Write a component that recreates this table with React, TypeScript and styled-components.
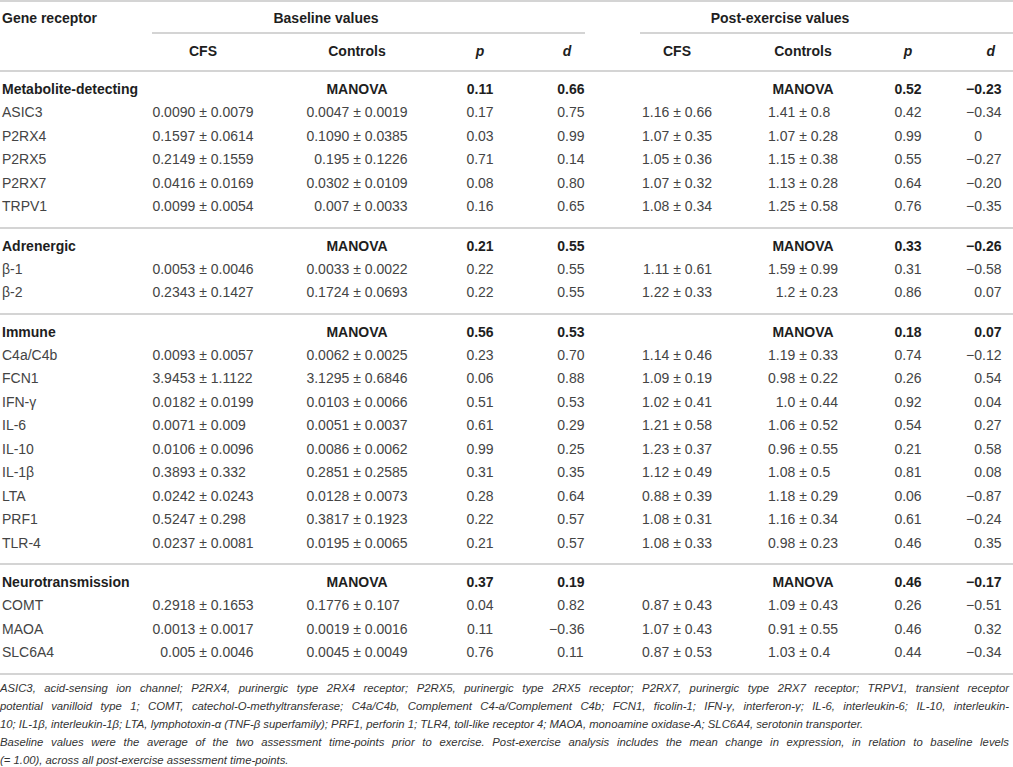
import React from "react";
import styled, { createGlobalStyle } from "styled-components";

const GlobalStyle = createGlobalStyle`
  body {
    margin: 0;
    background: #ffffff;
  }
  * {
    box-sizing: border-box;
  }
`;

// gene | CFS | Controls | p | d || CFS | Controls | p | d
const COLS = "152px 102px 206px 40px 134px 86px 166px 44px 1fr";
const LINE = "2px solid #d4d4d4";

type Align = "left" | "center" | "right";

const Page = styled.div`
  width: 1013px;
  font-family: "Liberation Sans", Arial, sans-serif;
  font-size: 14px;
  color: #444444;
`;

const Head = styled.div`
  display: grid;
  grid-template-columns: ${COLS};
  border-top: ${LINE};
`;

const HeadLabel = styled.div<{ $align?: Align; $pr?: number }>`
  padding: 5.5px ${({ $pr }) => $pr || 0}px 7.5px 0;
  line-height: 23px;
  font-weight: 700;
  color: #1e1e1e;
  text-align: ${({ $align }) => $align || "center"};
  white-space: nowrap;
`;

const GeneHead = styled.div`
  padding: 5px 0 0 2px;
  line-height: 23px;
  font-weight: 700;
  color: #1e1e1e;
`;

const SpanHead = styled.div<{ $from: number; $to: number; $ml: number; $mr: number; $trail: number }>`
  grid-column: ${({ $from, $to }) => `${$from} / ${$to}`};
  margin: 0 ${({ $mr }) => $mr}px 0 ${({ $ml }) => $ml}px;
  padding: 5px ${({ $trail }) => $trail}px 2px 0;
  border-bottom: ${LINE};
  line-height: 23px;
  font-weight: 700;
  color: #1e1e1e;
  text-align: center;
`;

const Stat = styled.span`
  font-style: italic;
`;

const Group = styled.section<{ $last?: boolean }>`
  border-top: ${LINE};
  border-bottom: ${({ $last }) => ($last ? LINE : "none")};
  padding-bottom: 8px;
`;

const Row = styled.div<{ $title?: boolean }>`
  display: grid;
  grid-template-columns: ${COLS};
  padding-top: ${({ $title }) => ($title ? 6 : 0)}px;
  line-height: ${({ $title }) => ($title ? 23 : 23.5)}px;
`;

const Cell = styled.div<{ $align?: Align; $bold?: boolean; $pr?: number }>`
  text-align: ${({ $align }) => $align || "center"};
  font-weight: ${({ $bold }) => ($bold ? 700 : 400)};
  color: ${({ $bold }) => ($bold ? "#1e1e1e" : "#444444")};
  padding-right: ${({ $pr }) => $pr || 0}px;
  padding-left: ${({ $align }) => ($align === "left" ? 2 : 0)}px;
  white-space: nowrap;
`;

const Pm = styled.span<{ $side: number }>`
  display: inline-grid;
  grid-template-columns: ${({ $side }) => `${$side}px auto ${$side}px`};
  text-align: left;
`;

const PmLeft = styled.span`
  text-align: right;
`;

const PmSign = styled.span`
  padding: 0 3.9px;
`;

const Dec = styled.span`
  display: inline-grid;
  grid-template-columns: 17px 21px;
`;

const DecInt = styled.span`
  text-align: right;
`;

const DecFrac = styled.span`
  text-align: left;
`;

const Foot = styled.div`
  margin-top: 4px;
  padding-right: 4px;
  font-style: italic;
  font-size: 11.3px;
  line-height: 18.2px;
  color: #333333;
`;

const FootLine = styled.div<{ $justify?: boolean }>`
  text-align: ${({ $justify }) => ($justify ? "justify" : "left")};
  text-align-last: ${({ $justify }) => ($justify ? "justify" : "left")};
`;

const PlusMinus = ({ value, side }: { value: string; side: number }) => {
  const [a, b] = value.split("±");
  return (
    <Pm $side={side}>
      <PmLeft>{a}</PmLeft>
      <PmSign>±</PmSign>
      <span>{b}</span>
    </Pm>
  );
};

const Decimal = ({ value }: { value: string }) => {
  const dot = value.indexOf(".");
  const int = dot < 0 ? value : value.slice(0, dot);
  const frac = dot < 0 ? "" : value.slice(dot);
  return (
    <Dec>
      <DecInt>{int}</DecInt>
      <DecFrac>{frac}</DecFrac>
    </Dec>
  );
};

type Block = {
  title: string;
  manova: [string, string, string, string];
  rows: string[][];
};

const BLOCKS: Block[] = [
  {
    title: "Metabolite-detecting",
    manova: ["0.11", "0.66", "0.52", "−0.23"],
    rows: [
      ["ASIC3", "0.0090±0.0079", "0.0047±0.0019", "0.17", "0.75", "1.16±0.66", "1.41±0.8", "0.42", "−0.34"],
      ["P2RX4", "0.1597±0.0614", "0.1090±0.0385", "0.03", "0.99", "1.07±0.35", "1.07±0.28", "0.99", "0"],
      ["P2RX5", "0.2149±0.1559", "0.195±0.1226", "0.71", "0.14", "1.05±0.36", "1.15±0.38", "0.55", "−0.27"],
      ["P2RX7", "0.0416±0.0169", "0.0302±0.0109", "0.08", "0.80", "1.07±0.32", "1.13±0.28", "0.64", "−0.20"],
      ["TRPV1", "0.0099±0.0054", "0.007±0.0033", "0.16", "0.65", "1.08±0.34", "1.25±0.58", "0.76", "−0.35"],
    ],
  },
  {
    title: "Adrenergic",
    manova: ["0.21", "0.55", "0.33", "−0.26"],
    rows: [
      ["β-1", "0.0053±0.0046", "0.0033±0.0022", "0.22", "0.55", "1.11±0.61", "1.59±0.99", "0.31", "−0.58"],
      ["β-2", "0.2343±0.1427", "0.1724±0.0693", "0.22", "0.55", "1.22±0.33", "1.2±0.23", "0.86", "0.07"],
    ],
  },
  {
    title: "Immune",
    manova: ["0.56", "0.53", "0.18", "0.07"],
    rows: [
      ["C4a/C4b", "0.0093±0.0057", "0.0062±0.0025", "0.23", "0.70", "1.14±0.46", "1.19±0.33", "0.74", "−0.12"],
      ["FCN1", "3.9453±1.1122", "3.1295±0.6846", "0.06", "0.88", "1.09±0.19", "0.98±0.22", "0.26", "0.54"],
      ["IFN-γ", "0.0182±0.0199", "0.0103±0.0066", "0.51", "0.53", "1.02±0.41", "1.0±0.44", "0.92", "0.04"],
      ["IL-6", "0.0071±0.009", "0.0051±0.0037", "0.61", "0.29", "1.21±0.58", "1.06±0.52", "0.54", "0.27"],
      ["IL-10", "0.0106±0.0096", "0.0086±0.0062", "0.99", "0.25", "1.23±0.37", "0.96±0.55", "0.21", "0.58"],
      ["IL-1β", "0.3893±0.332", "0.2851±0.2585", "0.31", "0.35", "1.12±0.49", "1.08±0.5", "0.81", "0.08"],
      ["LTA", "0.0242±0.0243", "0.0128±0.0073", "0.28", "0.64", "0.88±0.39", "1.18±0.29", "0.06", "−0.87"],
      ["PRF1", "0.5247±0.298", "0.3817±0.1923", "0.22", "0.57", "1.08±0.31", "1.16±0.34", "0.61", "−0.24"],
      ["TLR-4", "0.0237±0.0081", "0.0195±0.0065", "0.21", "0.57", "1.08±0.33", "0.98±0.23", "0.46", "0.35"],
    ],
  },
  {
    title: "Neurotransmission",
    manova: ["0.37", "0.19", "0.46", "−0.17"],
    rows: [
      ["COMT", "0.2918±0.1653", "0.1776±0.107", "0.04", "0.82", "0.87±0.43", "1.09±0.43", "0.26", "−0.51"],
      ["MAOA", "0.0013±0.0017", "0.0019±0.0016", "0.11", "−0.36", "1.07±0.43", "0.91±0.55", "0.46", "0.32"],
      ["SLC6A4", "0.005±0.0046", "0.0045±0.0049", "0.76", "0.11", "0.87±0.53", "1.03±0.4", "0.44", "−0.34"],
    ],
  },
];

export default function App() {
  return (
    <Page>
      <GlobalStyle />
      <Head>
        <GeneHead>Gene receptor</GeneHead>
        <SpanHead $from={2} $to={6} $ml={0} $mr={49} $trail={85}>
          Baseline values
        </SpanHead>
        <SpanHead $from={6} $to={10} $ml={6} $mr={0} $trail={93}>
          Post-exercise values
        </SpanHead>
        <div />
        <HeadLabel>CFS</HeadLabel>
        <HeadLabel>Controls</HeadLabel>
        <HeadLabel><Stat>p</Stat></HeadLabel>
        <HeadLabel><Stat>d</Stat></HeadLabel>
        <HeadLabel>CFS</HeadLabel>
        <HeadLabel>Controls</HeadLabel>
        <HeadLabel><Stat>p</Stat></HeadLabel>
        <HeadLabel $align="right" $pr={18}><Stat>d</Stat></HeadLabel>
      </Head>

      {BLOCKS.map((block, i) => (
        <Group key={block.title} $last={i === BLOCKS.length - 1}>
          <Row $title>
            <Cell $align="left" $bold>{block.title}</Cell>
            <div />
            <Cell $bold>MANOVA</Cell>
            <Cell $bold>{block.manova[0]}</Cell>
            <Cell $bold><Decimal value={block.manova[1]} /></Cell>
            <div />
            <Cell $bold>MANOVA</Cell>
            <Cell $bold>{block.manova[2]}</Cell>
            <Cell $bold $align="right" $pr={10}><Decimal value={block.manova[3]} /></Cell>
          </Row>
          {block.rows.map((r) => (
            <Row key={r[0]}>
              <Cell $align="left">{r[0]}</Cell>
              <Cell><PlusMinus value={r[1]} side={43} /></Cell>
              <Cell><PlusMinus value={r[2]} side={43} /></Cell>
              <Cell>{r[3]}</Cell>
              <Cell><Decimal value={r[4]} /></Cell>
              <Cell><PlusMinus value={r[5]} side={28} /></Cell>
              <Cell><PlusMinus value={r[6]} side={28} /></Cell>
              <Cell>{r[7]}</Cell>
              <Cell $align="right" $pr={10}><Decimal value={r[8]} /></Cell>
            </Row>
          ))}
        </Group>
      ))}

      <Foot>
        <FootLine $justify>
          ASIC3, acid-sensing ion channel; P2RX4, purinergic type 2RX4 receptor; P2RX5, purinergic type 2RX5 receptor; P2RX7, purinergic type 2RX7 receptor; TRPV1, transient receptor
        </FootLine>
        <FootLine $justify>
          potential vanilloid type 1; COMT, catechol-O-methyltransferase; C4a/C4b, Complement C4-a/Complement C4b; FCN1, ficolin-1; IFN-γ, interferon-γ; IL-6, interleukin-6; IL-10, interleukin-
        </FootLine>
        <FootLine>
          10; IL-1β, interleukin-1β; LTA, lymphotoxin-α (TNF-β superfamily); PRF1, perforin 1; TLR4, toll-like receptor 4; MAOA, monoamine oxidase-A; SLC6A4, serotonin transporter.
        </FootLine>
        <FootLine $justify>
          Baseline values were the average of the two assessment time-points prior to exercise. Post-exercise analysis includes the mean change in expression, in relation to baseline levels
        </FootLine>
        <FootLine>(= 1.00), across all post-exercise assessment time-points.</FootLine>
      </Foot>
    </Page>
  );
}
